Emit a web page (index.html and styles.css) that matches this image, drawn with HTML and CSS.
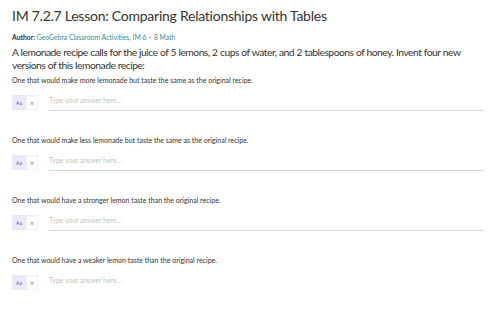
FILE: index.html
```html
<!DOCTYPE html>
<html>
<head>
<meta charset="utf-8">
<link rel="stylesheet" href="styles.css">
</head>
<body>
<div class="page">
  <h1 class="title">IM 7.2.7 Lesson: Comparing Relationships with Tables</h1>
  <div class="author"><b>Author:</b> <span class="link">GeoGebra Classroom Activities, IM 6 – 8 Math</span></div>
  <p class="intro">A lemonade recipe calls for the juice of 5 lemons, 2 cups of water, and 2 tablespoons of honey. Invent four new versions of this lemonade recipe:</p>
  <div class="q">
    <div class="label">One that would make more lemonade but taste the same as the original recipe.</div>
    <div class="answer">
      <div class="btns"><span class="btn on">Aa</span><span class="btn">π</span></div>
      <div class="field">Type your answer here...</div>
    </div>
  </div>
  <div class="q">
    <div class="label">One that would make less lemonade but taste the same as the original recipe.</div>
    <div class="answer">
      <div class="btns"><span class="btn on">Aa</span><span class="btn">π</span></div>
      <div class="field">Type your answer here...</div>
    </div>
  </div>
  <div class="q">
    <div class="label">One that would have a stronger lemon taste than the original recipe.</div>
    <div class="answer">
      <div class="btns"><span class="btn on">Aa</span><span class="btn">π</span></div>
      <div class="field">Type your answer here...</div>
    </div>
  </div>
  <div class="q">
    <div class="label">One that would have a weaker lemon taste than the original recipe.</div>
    <div class="answer">
      <div class="btns"><span class="btn on">Aa</span><span class="btn">π</span></div>
      <div class="field">Type your answer here...</div>
    </div>
  </div>
</div>
</body>
</html>
```
FILE: styles.css
```css
html, body { margin: 0; padding: 0; background: #fff; }
body { font-family: Lato, "Open Sans", sans-serif; color: #333; }
.page { padding: 6px 7px 0 12px; }
.title { font-size: 14px; font-weight: 400; margin: 0; line-height: 20px; color: #333; letter-spacing: -0.25px; }
.author { font-size: 6.8px; margin-top: 6px; line-height: 10px; color: #333; }
.author b { font-weight: 700; }
.link { color: #3b8d8e; }
.intro { font-size: 10.3px; line-height: 13px; margin: 4px 0 0 0; color: #333; letter-spacing: -0.5px; word-spacing: 0.3px; }
.q { margin-top: 3px; }
.q + .q { margin-top: 25px; }
.label { font-size: 7px; line-height: 10px; color: #333; }
.answer { display: flex; align-items: flex-end; margin-top: 10px; }
.btns { display: flex; }
.btn { width: 12px; height: 15px; display: flex; align-items: center; justify-content: center; font-size: 5px; color: #777; background: #fff; border: 1px solid #f0f0f0; box-sizing: border-box; }
.btn.on { width: 14px; background: #ebe9f8; border-color: #ebe9f8; color: #5a5a9a; }
.field { flex: 1; margin-left: 11px; margin-right: 6px; margin-bottom: -1px; font-size: 6.8px; color: #c4c4c4; padding-bottom: 5px; border-bottom: 1.5px solid #d8d8d8; line-height: 10px; }
```
